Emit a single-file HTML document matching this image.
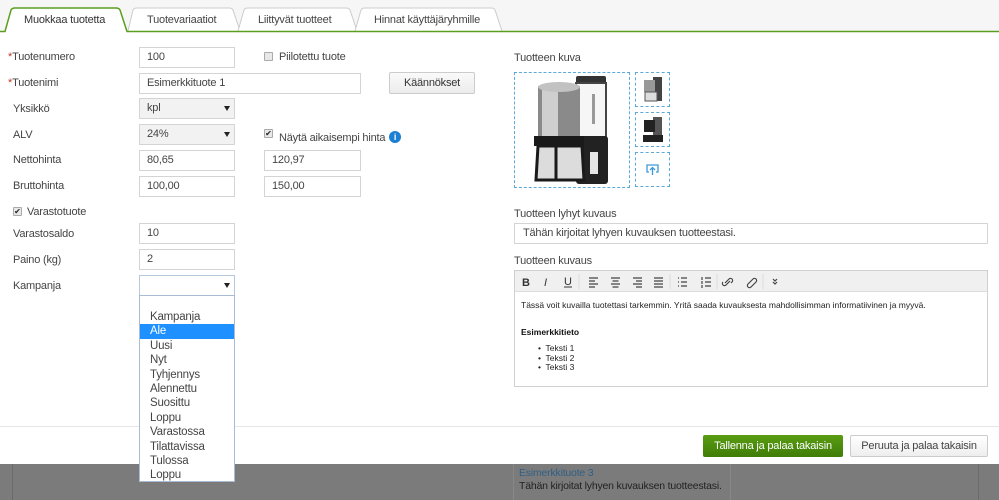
<!DOCTYPE html>
<html><head><meta charset="utf-8"><style>
*{margin:0;padding:0;box-sizing:border-box}
body{width:999px;height:500px;overflow:hidden;position:relative;background:#fff;font-family:"Liberation Sans",sans-serif;font-size:11px;letter-spacing:-0.2px;color:#444}
.a{position:absolute}
.lbl{position:absolute;font-size:11px;color:#444;white-space:nowrap}
.in{position:absolute;border:1px solid #d4d4d4;background:#fff;height:21px;padding-left:7px;line-height:19px;font-size:11px;color:#444}
.sel{background:#f2f2f2}
.arr{position:absolute;right:4px;top:7px;width:0;height:0;border-left:3px solid transparent;border-right:3px solid transparent;border-top:5px solid #222}
.req{color:#c0392b}
.cb{position:absolute;width:9px;height:9px;border:1px solid #aaa;border-radius:1px;background:#e8e8e8;font-size:8px;line-height:8px;text-align:center;color:#222;letter-spacing:0}
.dash{position:absolute;border:1px dashed #5aa9d8}
.opt{height:14.4px;line-height:14.4px;padding-left:10px;font-size:11.5px;color:#444}
</style></head><body>
<div class="a" style="left:0;top:0;width:999px;height:31px;background:#f6f6f6"></div>
<svg class="a" style="left:0;top:0" width="999" height="34">
<path d="M128 31 L133 10 Q134 8 137 8 L229 8 Q232 8 233 10 L240 31" fill="#fff" stroke="#ccc"/>
<path d="M238 31 L244 10 Q245 8 248 8 L346 8 Q349 8 350 10 L357 31" fill="#fff" stroke="#ccc"/>
<path d="M355 31 L361 10 Q362 8 365 8 L491 8 Q494 8 495 10 L502 31" fill="#fff" stroke="#ccc"/>
<path d="M0 31.5 L5 31.5 L11 10 Q12 8 15 8 L116 8 Q119 8 120 10 L127 31.5 L999 31.5" fill="#fff" stroke="#5a9e1e" stroke-width="1.5"/>
<rect x="6" y="31" width="120" height="3" fill="#fff"/>
</svg>
<div class="lbl" style="left:24px;top:14px;color:#333">Muokkaa tuotetta</div>
<div class="lbl" style="left:147px;top:14px">Tuotevariaatiot</div>
<div class="lbl" style="left:258px;top:14px">Liittyvät tuotteet</div>
<div class="lbl" style="left:374px;top:14px">Hinnat käyttäjäryhmille</div>

<div class="lbl" style="left:8px;top:51px"><span class="req">*</span>Tuotenumero</div>
<div class="in" style="left:139px;top:47px;width:96px">100</div>
<div class="cb" style="left:264px;top:52px"></div>
<div class="lbl" style="left:279px;top:51px">Piilotettu tuote</div>

<div class="lbl" style="left:8px;top:77px"><span class="req">*</span>Tuotenimi</div>
<div class="in" style="left:139px;top:73px;width:222px">Esimerkkituote 1</div>
<div class="a" style="left:389px;top:72px;width:86px;height:22px;border:1px solid #ccc;border-radius:2px;background:linear-gradient(#fafafa,#ececec);text-align:center;line-height:20px;color:#333">Käännökset</div>

<div class="lbl" style="left:13px;top:103px">Yksikkö</div>
<div class="in sel" style="left:139px;top:98px;width:96px">kpl<div class="arr"></div></div>
<div class="lbl" style="left:13px;top:129px">ALV</div>
<div class="in sel" style="left:139px;top:124px;width:96px">24%<div class="arr"></div></div>
<div class="cb" style="left:264px;top:129px">✔</div>
<div class="lbl" style="left:279px;top:132px">Näytä aikaisempi hinta</div>
<div class="a" style="left:389px;top:131px;width:12px;height:12px;border-radius:50%;background:#1b7fd4;color:#fff;font-size:9px;font-weight:bold;text-align:center;line-height:12px">i</div>

<div class="lbl" style="left:13px;top:154px">Nettohinta</div>
<div class="in" style="left:139px;top:150px;width:96px">80,65</div>
<div class="in" style="left:264px;top:150px;width:97px">120,97</div>
<div class="lbl" style="left:13px;top:180px">Bruttohinta</div>
<div class="in" style="left:139px;top:176px;width:96px">100,00</div>
<div class="in" style="left:264px;top:176px;width:97px">150,00</div>

<div class="cb" style="left:13px;top:207px">✔</div>
<div class="lbl" style="left:27px;top:206px">Varastotuote</div>
<div class="lbl" style="left:13px;top:228px">Varastosaldo</div>
<div class="in" style="left:139px;top:223px;width:96px">10</div>
<div class="lbl" style="left:13px;top:254px">Paino (kg)</div>
<div class="in" style="left:139px;top:249px;width:96px">2</div>
<div class="lbl" style="left:13px;top:280px">Kampanja</div>
<div class="in" style="left:139px;top:275px;width:96px;border-color:#b5c8dc"><div class="arr"></div></div>

<div class="a" style="left:0;top:426px;width:999px;height:1px;background:#e6e6e6"></div>
<div class="a" style="left:0;top:464px;width:999px;height:36px;background:#7b7b7b"></div>
<div class="a" style="left:12px;top:464px;width:1px;height:36px;background:#6a6a6a"></div>
<div class="a" style="left:513px;top:464px;width:1px;height:36px;background:#888"></div>
<div class="a" style="left:730px;top:464px;width:1px;height:36px;background:#888"></div>
<div class="a" style="left:978px;top:464px;width:1px;height:36px;background:#6a6a6a"></div>
<div class="lbl" style="left:519px;top:467px;color:#2f5f86;font-size:10.5px">Esimerkkituote 3</div>
<div class="lbl" style="left:519px;top:480px;color:#222;font-size:10.5px">Tähän kirjoitat lyhyen kuvauksen tuotteestasi.</div>

<div class="a" style="left:139px;top:295px;width:96px;height:187px;border:1px solid #a8bdd3;background:#fff;padding-top:14px">
<div class="opt">Kampanja</div><div class="opt" style="background:#1e90ff;color:#fff">Ale</div><div class="opt">Uusi</div><div class="opt">Nyt</div><div class="opt">Tyhjennys</div><div class="opt">Alennettu</div><div class="opt">Suosittu</div><div class="opt">Loppu</div><div class="opt">Varastossa</div><div class="opt">Tilattavissa</div><div class="opt">Tulossa</div><div class="opt">Loppu</div>
</div>

<div class="lbl" style="left:514px;top:52px">Tuotteen kuva</div>
<div class="dash" style="left:514px;top:72px;width:116px;height:116px"></div>
<svg class="a" style="left:526px;top:74px" width="100" height="112">
<rect x="50" y="2" width="30" height="8" rx="2" fill="#333"/>
<rect x="50" y="9" width="30" height="56" fill="#f6f6f6" stroke="#444" stroke-width="2"/>
<rect x="66" y="20" width="3" height="30" fill="#999"/>
<rect x="12" y="12" width="42" height="52" fill="#8a8a8a"/>
<rect x="16" y="12" width="16" height="52" fill="#cfcfcf"/>
<ellipse cx="33" cy="13" rx="21" ry="5" fill="#c2c2c2"/>
<rect x="50" y="62" width="32" height="48" rx="3" fill="#222"/>
<rect x="8" y="62" width="50" height="10" fill="#1a1a1a"/>
<path d="M12 72 L56 72 L58 106 L10 106 Z" fill="#dcdcdc" stroke="#1a1a1a" stroke-width="3"/>
<path d="M30 72 V106" stroke="#1a1a1a" stroke-width="3"/>
<rect x="64" y="78" width="8" height="22" fill="#e6e6e6"/>
</svg>
<div class="dash" style="left:635px;top:72px;width:35px;height:35px"></div>
<svg class="a" style="left:641px;top:75px" width="24" height="30"><rect x="12" y="2" width="9" height="24" fill="#444"/><rect x="3" y="5" width="11" height="12" fill="#999"/><rect x="4" y="17" width="12" height="9" fill="#ddd" stroke="#555"/></svg>
<div class="dash" style="left:635px;top:112px;width:35px;height:35px"></div>
<svg class="a" style="left:641px;top:115px" width="24" height="30"><rect x="12" y="2" width="9" height="24" fill="#555"/><rect x="3" y="5" width="11" height="12" fill="#222"/><rect x="2" y="20" width="20" height="7" fill="#222"/></svg>
<div class="dash" style="left:635px;top:152px;width:35px;height:35px"></div>
<svg class="a" style="left:646px;top:164px" width="14" height="12"><path d="M3 8 H1 V1 H12 V8 H10 M6.5 11 V4 M4 6 L6.5 3.5 L9 6" fill="none" stroke="#3a9ad9" stroke-width="1.3"/></svg>

<div class="lbl" style="left:514px;top:208px">Tuotteen lyhyt kuvaus</div>
<div class="in" style="left:514px;top:223px;width:474px;height:21px;padding-left:8px">Tähän kirjoitat lyhyen kuvauksen tuotteestasi.</div>
<div class="lbl" style="left:514px;top:255px">Tuotteen kuvaus</div>
<div class="a" style="left:514px;top:270px;width:474px;height:117px;border:1px solid #d0d0d0"></div>
<div class="a" style="left:515px;top:271px;width:472px;height:21px;background:#f0f0f0;border-bottom:1px solid #ddd"></div>
<svg class="a" style="left:515px;top:271px" width="300" height="21" font-family="Liberation Sans" font-size="11" fill="#333">
<text x="7" y="15" font-weight="bold">B</text><text x="29" y="15" font-style="italic">I</text><text x="49" y="14">U</text><line x1="49" y1="16" x2="57" y2="16" stroke="#333"/>
<line x1="64" y1="3" x2="64" y2="18" stroke="#ddd"/>
<g stroke="#444" stroke-width="1.2" fill="none">
<path d="M74 7h9M74 10h6M74 13h9M74 16h6"/><path d="M96 7h9M97.5 10h6M96 13h9M97.5 16h6"/><path d="M118 7h9M121 10h6M118 13h9M121 16h6"/><path d="M139 7h9M139 10h9M139 13h9M139 16h9"/>
<path d="M166 7h6M166 11h6M166 15h6M163 7h1M163 11h1M163 15h1"/><path d="M190 7h6M190 11h6M190 15h6M187 6v3M187 10v3M187 14v3"/>
<path d="M210 12l4-4a2 2 0 0 1 3 3l-1 1M215 10l-4 4a2 2 0 0 1-3-3"/><path d="M233 13l5-5a2 2 0 0 1 3 3l-5 5a2 2 0 0 1-3-3z"/>
<path d="M258 8l2 2 2-2M258 11l2 2 2-2"/></g>
<line x1="155" y1="3" x2="155" y2="18" stroke="#ddd"/><line x1="202" y1="3" x2="202" y2="18" stroke="#ddd"/><line x1="248" y1="3" x2="248" y2="18" stroke="#ddd"/>
</svg>
<div class="lbl" style="left:521px;top:300px;font-size:8.5px;letter-spacing:0;color:#222">Tässä voit kuvailla tuotettasi tarkemmin. Yritä saada kuvauksesta mahdollisimman informatiivinen ja myyvä.</div>
<div class="lbl" style="left:521px;top:327px;font-size:8.5px;letter-spacing:0;color:#111;font-weight:bold">Esimerkkitieto</div>
<div class="lbl" style="left:538px;top:344px;font-size:8.5px;letter-spacing:0;color:#222;line-height:9.5px">•&nbsp; Teksti 1<br>•&nbsp; Teksti 2<br>•&nbsp; Teksti 3</div>

<div class="a" style="left:703px;top:435px;width:140px;height:22px;background:linear-gradient(#5a9c12,#3f7d08);border-radius:2px;color:#fff;text-align:center;line-height:22px">Tallenna ja palaa takaisin</div>
<div class="a" style="left:850px;top:435px;width:138px;height:22px;border:1px solid #ccc;border-radius:2px;background:linear-gradient(#fff,#eee);color:#444;text-align:center;line-height:20px">Peruuta ja palaa takaisin</div>
</body></html>
